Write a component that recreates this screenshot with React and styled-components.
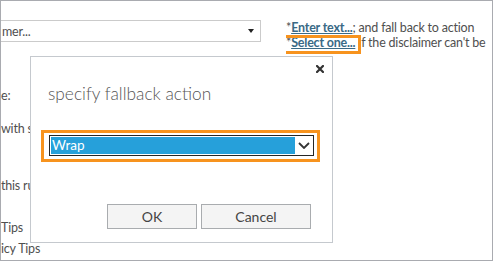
import React from 'react';
import styled, { createGlobalStyle } from 'styled-components';

const GlobalStyle = createGlobalStyle`
  html, body { margin: 0; padding: 0; background: #fff; }
  body { font-family: Lato, "Open Sans", sans-serif; }
`;

const Frame = styled.div`
  position: relative;
  box-sizing: border-box;
  width: 493px;
  height: 261px;
  border: 1px solid #a9abb0;
  background: #fff;
  overflow: hidden;
  font-family: Lato, "Open Sans", sans-serif;
  font-size: 12.5px;
  letter-spacing: -0.2px;
  line-height: 15px;
  color: #4f4f4f;
`;

const Page = styled.div`
  display: grid;
  grid-template-columns: 285px 1fr;
  padding-top: 19px;
`;

const LeftCol = styled.div`
  display: flex;
  flex-direction: column;
`;

const FieldSelect = styled.div`
  box-sizing: border-box;
  margin-left: -10px;
  width: 270px;
  height: 22px;
  border: 1px solid #cbcbcb;
  display: flex;
  align-items: center;
  justify-content: space-between;
  padding: 0 6px 0 10px;
  white-space: nowrap;
`;

const Triangle = styled.span`
  width: 0;
  height: 0;
  border-left: 3.5px solid transparent;
  border-right: 3.5px solid transparent;
  border-top: 4px solid #222;
`;

const Label = styled.div`
  margin-top: ${(p) => p.$mt}px;
  white-space: nowrap;
`;

const RightCol = styled.div`
  display: flex;
  flex-direction: column;
  white-space: nowrap;
  overflow: hidden;
`;

const Line = styled.div`
  white-space: nowrap;
`;

const Link = styled.a`
  font-weight: 700;
  color: #3a6a86;
  text-decoration: underline;
  cursor: pointer;
`;

const Marked = styled.span`
  position: relative;
  &::after {
    content: '';
    position: absolute;
    left: -5px;
    right: -6px;
    top: 0;
    bottom: -4px;
    border: 3px solid #f7931e;
    pointer-events: none;
  }
`;

const Dialog = styled.div`
  position: absolute;
  left: 29px;
  top: 55px;
  box-sizing: border-box;
  width: 303px;
  height: 187px;
  border: 1px solid #c5c9ce;
  background: #fff;
  display: flex;
  flex-direction: column;
  letter-spacing: 0;
`;

const CloseRow = styled.div`
  display: flex;
  justify-content: flex-end;
  padding: 8px 8px 0 0;
`;

const CloseButton = styled.button`
  width: 8px;
  height: 8px;
  padding: 0;
  border: 0;
  background: none;
  display: block;
  cursor: pointer;
  svg { display: block; }
`;

const Title = styled.div`
  margin: 9px 0 0 17px;
  font-size: 17.3px;
  font-weight: 300;
  line-height: 24px;
  color: #555;
`;

const FocusRing = styled.div`
  box-sizing: border-box;
  margin: 24px 0 0 10px;
  width: 279px;
  border: 3px solid #f7931e;
  padding: 2px 3px 3px 5px;
`;

const Select = styled.div`
  box-sizing: border-box;
  height: 21px;
  border: 1px solid #262626;
  padding: 1px;
  display: flex;
  background: #fff;
`;

const Option = styled.div`
  flex: 1;
  background: #26a0da;
  color: #fff;
  font-size: 13.5px;
  line-height: 17px;
  padding-left: 1px;
`;

const Chevron = styled.div`
  width: 17px;
  display: flex;
  align-items: center;
  justify-content: center;
`;

const Buttons = styled.div`
  display: flex;
  justify-content: flex-end;
  gap: 4px;
  margin-top: 42px;
  padding-right: 21px;
`;

const Button = styled.button`
  box-sizing: border-box;
  width: ${(p) => p.$w}px;
  height: 25px;
  border: 1px solid #a9acaf;
  background: #f4f4f4;
  color: #444;
  font-family: Lato, "Open Sans", sans-serif;
  font-size: 14px;
  padding: 0;
`;

export default function App() {
  return (
    <>
      <GlobalStyle />
      <Frame>
        <Page>
          <LeftCol>
            <FieldSelect>
              <span>mer...</span>
              <Triangle />
            </FieldSelect>
            <Label $mt={46}>e:</Label>
            <Label $mt={18}>with sender</Label>
            <Label $mt={42}>this rule</Label>
            <Label $mt={27}>Tips</Label>
            <Label $mt={6}>icy Tips</Label>
          </LeftCol>
          <RightCol>
            <Line>
              *<Link>Enter text...</Link>; and fall back to action
            </Line>
            <Line>
              <Marked>*<Link>Select one...</Link></Marked> if the disclaimer can't be
            </Line>
          </RightCol>
        </Page>
        <Dialog>
          <CloseRow>
            <CloseButton aria-label="close">
              <svg width="8" height="8" viewBox="0 0 8 8">
                <path d="M1 1 L7 7 M7 1 L1 7" stroke="#333" strokeWidth="2.2" strokeLinecap="square" />
              </svg>
            </CloseButton>
          </CloseRow>
          <Title>specify fallback action</Title>
          <FocusRing>
            <Select>
              <Option>Wrap</Option>
              <Chevron>
                <svg width="12" height="7" viewBox="0 0 12 7">
                  <polyline points="1,1 6,6 11,1" fill="none" stroke="#333" strokeWidth="1.8" />
                </svg>
              </Chevron>
            </Select>
          </FocusRing>
          <Buttons>
            <Button $w={90}>OK</Button>
            <Button $w={110}>Cancel</Button>
          </Buttons>
        </Dialog>
      </Frame>
    </>
  );
}
